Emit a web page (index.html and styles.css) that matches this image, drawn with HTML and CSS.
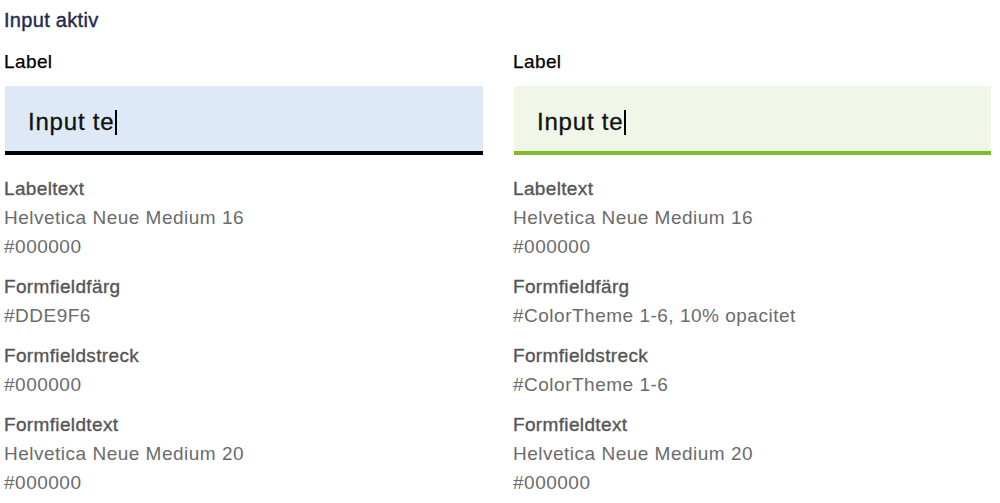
FILE: index.html
```html
<!DOCTYPE html>
<html lang="en">
<head>
    <meta charset="UTF-8">
    <meta name="viewport" content="width=device-width, initial-scale=1.0">
    <title>Input aktiv</title>
    <link rel="stylesheet" href="styles.css">
</head>
<body>

    <div class="page">
        <h2 class="title">Input aktiv</h2>

        <div class="columns">
            <!-- Default theme -->
            <div class="column">
                <div class="field-label">Label</div>
                <div class="input-box input-blue">
                    <span class="input-text">Input te</span><span class="caret"></span>
                </div>

                <div class="specs">
                    <div class="spec-group">
                        <div class="spec-title">Labeltext</div>
                        <div class="spec-value">Helvetica Neue Medium 16</div>
                        <div class="spec-value">#000000</div>
                    </div>
                    <div class="spec-group">
                        <div class="spec-title">Formfieldfärg</div>
                        <div class="spec-value">#DDE9F6</div>
                    </div>
                    <div class="spec-group">
                        <div class="spec-title">Formfieldstreck</div>
                        <div class="spec-value">#000000</div>
                    </div>
                    <div class="spec-group">
                        <div class="spec-title">Formfieldtext</div>
                        <div class="spec-value">Helvetica Neue Medium 20</div>
                        <div class="spec-value">#000000</div>
                    </div>
                </div>
            </div>

            <!-- Color theme -->
            <div class="column">
                <div class="field-label">Label</div>
                <div class="input-box input-green">
                    <span class="input-text">Input te</span><span class="caret"></span>
                </div>

                <div class="specs">
                    <div class="spec-group">
                        <div class="spec-title">Labeltext</div>
                        <div class="spec-value">Helvetica Neue Medium 16</div>
                        <div class="spec-value">#000000</div>
                    </div>
                    <div class="spec-group">
                        <div class="spec-title">Formfieldfärg</div>
                        <div class="spec-value">#ColorTheme 1-6, 10% opacitet</div>
                    </div>
                    <div class="spec-group">
                        <div class="spec-title">Formfieldstreck</div>
                        <div class="spec-value">#ColorTheme 1-6</div>
                    </div>
                    <div class="spec-group">
                        <div class="spec-title">Formfieldtext</div>
                        <div class="spec-value">Helvetica Neue Medium 20</div>
                        <div class="spec-value">#000000</div>
                    </div>
                </div>
            </div>
        </div>
    </div>

</body>
</html>
```

FILE: styles.css
```css
/* General Styles */
* {
    margin: 0;
    padding: 0;
    box-sizing: border-box;
}

body {
    font-family: 'Liberation Sans', Arial, sans-serif;
    background-color: #fff;
    color: #000;
}

.page {
    padding: 9px 0 0 4px;
}

/* Page title */
.title {
    font-size: 20px;
    line-height: 22px;
    font-weight: normal;
    color: #1e2b50;
    letter-spacing: 0.3px;
    -webkit-text-stroke: 0.4px #1e2b50;
}

/* Two columns side by side */
.columns {
    display: grid;
    grid-template-columns: 479px 478px;
    column-gap: 30px;
    margin-top: 20px;
}

.field-label {
    font-size: 19px;
    line-height: 22px;
    letter-spacing: 0.4px;
    -webkit-text-stroke: 0.25px #000;
}

/* Input Fields */
.input-box {
    margin-top: 13px;
    margin-left: 1px;
    height: 69px;
    padding: 23px 0 0 23px;
    display: flex;
    align-items: flex-start;
    border-bottom: 4px solid #000;
}

.input-blue {
    background-color: #dde9f6;
    border-bottom-color: #000;
}

.input-green {
    background-color: #f0f6e8;
    border-bottom-color: #82bc2a;
}

.input-text {
    font-size: 24px;
    line-height: 26px;
    letter-spacing: 0.8px;
    color: #111;
    -webkit-text-stroke: 0.3px #111;
}

.caret {
    width: 2px;
    height: 25px;
    margin-left: 1px;
    margin-top: 1px;
    background-color: #000;
}

/* Spec list */
.specs {
    margin-top: 19px;
}

.spec-group + .spec-group {
    margin-top: 11px;
}

.spec-title,
.spec-value {
    font-size: 19px;
    line-height: 29px;
    letter-spacing: 0.5px;
}

.spec-title {
    letter-spacing: 0.35px;
    color: #555;
    -webkit-text-stroke: 0.35px #555;
}

.spec-value {
    color: #6b6b6b;
}
```
